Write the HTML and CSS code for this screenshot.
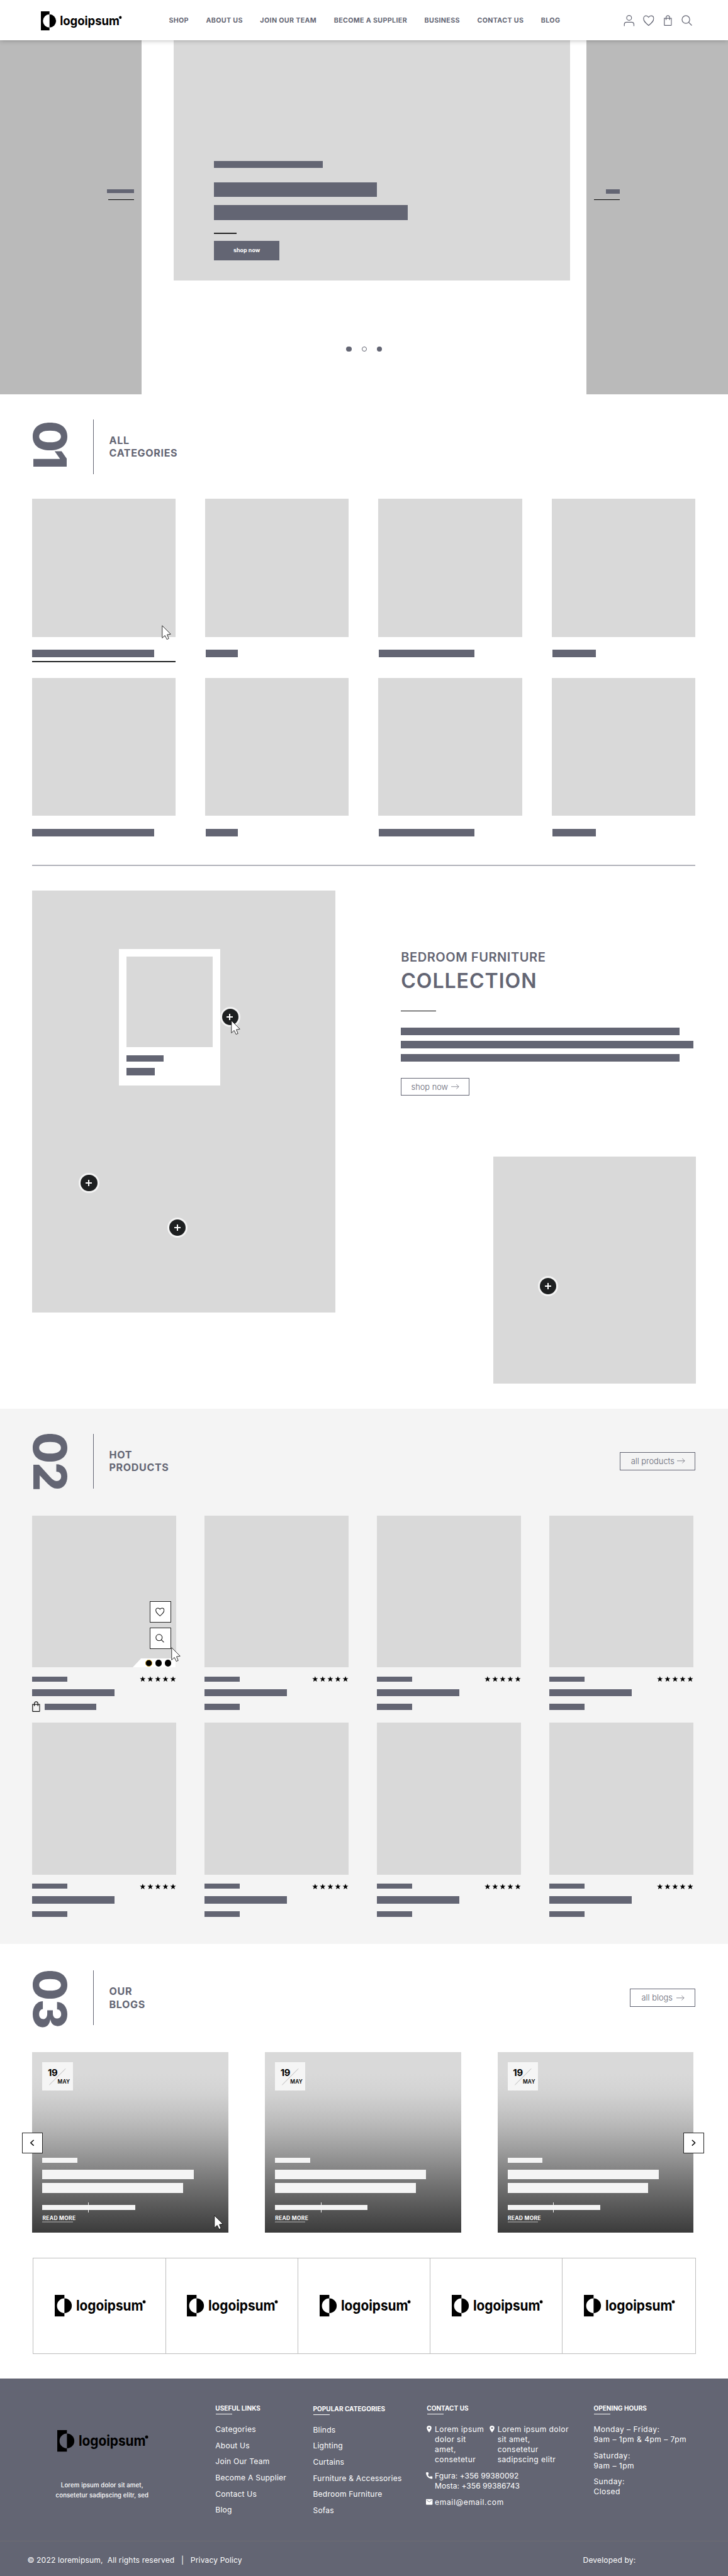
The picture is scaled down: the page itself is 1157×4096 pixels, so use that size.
FILE: index.html
```html
<!DOCTYPE html>
<html lang="en">
<head>
<meta charset="utf-8">
<title>logoipsum</title>
<link rel="stylesheet" href="styles.css">
</head>
<body>
<svg width="0" height="0" class="defs">
  <symbol id="mark" viewBox="0 0 160 38">
    <path d="M0 0H17V6A13 13 0 0 0 17 32V38H0Z"/>
    <path d="M17 6A13 13 0 0 1 17 32Z"/>
    <circle cx="157.2" cy="12" r="2.8"/>
  </symbol>
  <symbol id="heart" viewBox="0 0 22 22"><path d="M11 20.5C5 15.5 1 12 1 6.8C1 3.500 3.300 1.500 6 1.500C8.300 1.500 10 2.700 11 4.300C12 2.700 13.700 1.500 16 1.500C18.700 1.500 21 3.500 21 6.800C21 12 17 15.500 11 20.500Z"/></symbol>
  <symbol id="search" viewBox="0 0 22 22"><circle cx="8.800" cy="8.800" r="7.600"/><path d="M14.200 14.200L20.500 20.500"/></symbol>
  <symbol id="bag" viewBox="0 0 16 22"><path d="M1 6.500H15V19.500Q15 20.500 14 20.500H2Q1 20.500 1 19.500ZM4.500 9.500V4.800A3.500 3.800 0 0 1 11.500 4.800V9.500"/></symbol>
  <symbol id="arrow" viewBox="0 0 17 12"><path d="M0 6H16M11 1L16 6L11 11"/></symbol>
  <symbol id="cursor" viewBox="0 0 19 30"><path d="M1 1V25.500L6.400 20.500L10.300 28.200L14 26.500L10.600 18.900L17.700 17.800Z"/></symbol>
  <symbol id="star" viewBox="0 0 12 12"><path d="M6 .3L7.500 4.300H11.700L8.400 6.900L9.600 11.300L6 8.700L2.400 11.300L3.600 6.900L.3 4.300H4.500Z"/></symbol>
  <symbol id="stars" viewBox="0 0 72 12">
    <use href="#star" x="0" width="12" height="12"/><use href="#star" x="15" width="12" height="12"/><use href="#star" x="30" width="12" height="12"/><use href="#star" x="45" width="12" height="12"/><use href="#star" x="60" width="12" height="12"/>
  </symbol>
  <symbol id="pin" viewBox="0 0 10 14"><path fill-rule="evenodd" d="M5 0A4.700 4.700 0 0 1 9.700 4.700C9.700 8 5 13.500 5 13.500S.3 8 .3 4.700A4.700 4.700 0 0 1 5 0ZM5 3A1.700 1.700 0 1 0 5 6.400A1.700 1.700 0 1 0 5 3Z"/></symbol>
</svg>
<div class="page">
  <header class="topbar">
    <svg class="logo" viewBox="0 0 160 38"><use href="#mark" width="160" height="38"/><text x="37.500" y="27.500" textLength="118" lengthAdjust="spacingAndGlyphs" class="logo-word">logoipsum</text></svg>
    <nav class="nav">
      <a>SHOP</a><a>ABOUT US</a><a>JOIN OUR TEAM</a><a>BECOME A SUPPLIER</a><a>BUSINESS</a><a>CONTACT US</a><a>BLOG</a>
    </nav>
    <div class="tools">
      <svg class="i-user" viewBox="0 0 22 24"><circle cx="11" cy="6.800" r="4.800"/><path d="M1.500 23V20Q1.500 15.500 6 15.500H16Q20.500 15.500 20.500 20V23"/></svg>
      <svg class="i-heart"><use href="#heart"/></svg>
      <svg class="i-bag"><use href="#bag"/></svg>
      <svg class="i-search"><use href="#search"/></svg>
    </div>
  </header>

  <section class="hero">
    <div class="side side-left"><i class="bar"></i><i class="rule"></i></div>
    <div class="slide-col">
      <div class="slide">
        <i class="bar eyebrow"></i><i class="bar line-a"></i><i class="bar line-b"></i><i class="dash"></i>
        <a class="solid-btn">shop now</a>
      </div>
      <div class="dots"><i></i><i class="open"></i><i></i></div>
    </div>
    <div class="side side-right"><i class="bar"></i><i class="rule"></i></div>
  </section>

  <section class="categories">
    <div class="head head-1"><b class="num">01</b><h2>ALL<br>CATEGORIES</h2></div>
    <div class="cat-grid">
      <div class="cat active"><div class="pic"><svg class="cursor"><use href="#cursor"/></svg></div><i class="bar b1"></i></div>
      <div class="cat"><div class="pic"></div><i class="bar b2"></i></div>
      <div class="cat"><div class="pic"></div><i class="bar b3"></i></div>
      <div class="cat"><div class="pic"></div><i class="bar b4"></i></div>
      <div class="cat"><div class="pic"></div><i class="bar b1"></i></div>
      <div class="cat"><div class="pic"></div><i class="bar b2"></i></div>
      <div class="cat"><div class="pic"></div><i class="bar b3"></i></div>
      <div class="cat"><div class="pic"></div><i class="bar b4"></i></div>
    </div>
  </section>

  <section class="collection">
    <div class="room">
      <div class="popup"><div class="popup-pic"></div><i class="bar p1"></i><i class="bar p2"></i></div>
      <span class="spot s1"></span><span class="spot s2"></span><span class="spot s3"></span>
      <svg class="cursor"><use href="#cursor"/></svg>
    </div>
    <div class="copy">
      <h3>BEDROOM FURNITURE</h3>
      <h2>COLLECTION</h2>
      <i class="thin"></i>
      <div class="lines"><i class="bar"></i><i class="bar long"></i><i class="bar"></i></div>
      <a class="line-btn shop">shop now<svg><use href="#arrow"/></svg></a>
      <div class="room-small"><span class="spot s4"></span></div>
    </div>
  </section>

  <section class="products">
    <div class="head"><b class="num">02</b><h2>HOT<br>PRODUCTS</h2><a class="line-btn all-p">all products<svg><use href="#arrow"/></svg></a></div>
    <div class="prod-grid">
      <div class="prod">
        <div class="pic">
          <span class="act a1"><svg><use href="#heart"/></svg></span>
          <span class="act a2"><svg><use href="#search"/></svg></span>
          <span class="swatches"><i class="on"></i><i></i><i></i></span>
          <svg class="cursor"><use href="#cursor"/></svg>
        </div>
        <div class="meta"><i class="bar"></i><svg><use href="#stars"/></svg></div><i class="bar name"></i>
        <div class="buy"><svg><use href="#bag"/></svg><i class="bar"></i></div>
      </div>
      <div class="prod"><div class="pic"></div><div class="meta"><i class="bar"></i><svg><use href="#stars"/></svg></div><i class="bar name"></i><i class="bar price"></i></div>
      <div class="prod"><div class="pic"></div><div class="meta"><i class="bar"></i><svg><use href="#stars"/></svg></div><i class="bar name"></i><i class="bar price"></i></div>
      <div class="prod"><div class="pic"></div><div class="meta"><i class="bar"></i><svg><use href="#stars"/></svg></div><i class="bar name"></i><i class="bar price"></i></div>
      <div class="prod"><div class="pic"></div><div class="meta"><i class="bar"></i><svg><use href="#stars"/></svg></div><i class="bar name"></i><i class="bar price"></i></div>
      <div class="prod"><div class="pic"></div><div class="meta"><i class="bar"></i><svg><use href="#stars"/></svg></div><i class="bar name"></i><i class="bar price"></i></div>
      <div class="prod"><div class="pic"></div><div class="meta"><i class="bar"></i><svg><use href="#stars"/></svg></div><i class="bar name"></i><i class="bar price"></i></div>
      <div class="prod"><div class="pic"></div><div class="meta"><i class="bar"></i><svg><use href="#stars"/></svg></div><i class="bar name"></i><i class="bar price"></i></div>
    </div>
  </section>

  <section class="blogs">
    <div class="head"><b class="num">03</b><h2>OUR<br>BLOGS</h2><a class="line-btn all-b">all blogs<svg><use href="#arrow"/></svg></a></div>
    <div class="blog-row">
      <article class="post">
        <div class="date"><b>19</b><svg viewBox="0 0 34 34"><path d="M.5 33.500L33.500 .5"/></svg><span>MAY</span></div>
        <i class="t0"></i><i class="t1"></i><i class="t2"></i><i class="t3"></i><a>READ MORE</a>
        <svg class="cursor"><use href="#cursor"/></svg>
      </article>
      <article class="post">
        <div class="date"><b>19</b><svg viewBox="0 0 34 34"><path d="M.5 33.500L33.500 .5"/></svg><span>MAY</span></div>
        <i class="t0"></i><i class="t1"></i><i class="t2"></i><i class="t3"></i><a>READ MORE</a>
      </article>
      <article class="post">
        <div class="date"><b>19</b><svg viewBox="0 0 34 34"><path d="M.5 33.500L33.500 .5"/></svg><span>MAY</span></div>
        <i class="t0"></i><i class="t1"></i><i class="t2"></i><i class="t3"></i><a>READ MORE</a>
      </article>
      <span class="step prev"><svg viewBox="0 0 8 13"><path d="M7 1L1 6.500L7 12"/></svg></span>
      <span class="step next"><svg viewBox="0 0 8 13"><path d="M1 1L7 6.500L1 12"/></svg></span>
    </div>
    <div class="brands">
      <div><svg viewBox="0 0 160 38"><use href="#mark" width="160" height="38"/><text x="37.500" y="27.500" textLength="118" lengthAdjust="spacingAndGlyphs" class="logo-word">logoipsum</text></svg></div>
      <div><svg viewBox="0 0 160 38"><use href="#mark" width="160" height="38"/><text x="37.500" y="27.500" textLength="118" lengthAdjust="spacingAndGlyphs" class="logo-word">logoipsum</text></svg></div>
      <div><svg viewBox="0 0 160 38"><use href="#mark" width="160" height="38"/><text x="37.500" y="27.500" textLength="118" lengthAdjust="spacingAndGlyphs" class="logo-word">logoipsum</text></svg></div>
      <div><svg viewBox="0 0 160 38"><use href="#mark" width="160" height="38"/><text x="37.500" y="27.500" textLength="118" lengthAdjust="spacingAndGlyphs" class="logo-word">logoipsum</text></svg></div>
      <div><svg viewBox="0 0 160 38"><use href="#mark" width="160" height="38"/><text x="37.500" y="27.500" textLength="118" lengthAdjust="spacingAndGlyphs" class="logo-word">logoipsum</text></svg></div>
    </div>
  </section>

  <footer>
    <div class="foot-cols">
      <div class="foot-brand"><svg viewBox="0 0 160 38"><use href="#mark" width="160" height="38"/><text x="37.500" y="27.500" textLength="118" lengthAdjust="spacingAndGlyphs" class="logo-word">logoipsum</text></svg><p>Lorem ipsum dolor sit amet,<br>consetetur sadipscing elitr, sed</p></div>
      <div class="col useful"><h4>USEFUL LINKS</h4><a>Categories</a><a>About Us</a><a>Join Our Team</a><a>Become A Supplier</a><a>Contact Us</a><a>Blog</a></div>
      <div class="col popular"><h4>POPULAR CATEGORIES</h4><a>Blinds</a><a>Lighting</a><a>Curtains</a><a>Furniture &amp; Accessories</a><a>Bedroom Furniture</a><a>Sofas</a></div>
      <div class="col contact"><h4>CONTACT US</h4>
        <div class="addresses">
          <div class="entry"><svg class="pin"><use href="#pin"/></svg><p>Lorem ipsum<br>dolor sit<br>amet,<br>consetetur</p></div>
          <div class="entry"><svg class="pin"><use href="#pin"/></svg><p>Lorem ipsum dolor<br>sit amet,<br>consetetur<br>sadipscing elitr</p></div>
        </div>
        <div class="entry nums"><svg class="ico" viewBox="0 0 13 13"><path d="M2.600 0L4.600 .2L5.300 3.600L3.700 5.200A9 9 0 0 0 7.800 9.300L9.400 7.700L12.800 8.400V12.200Q12.800 13 12 13C5 12.800 .2 8 0 1Q0 .2 .8 .2Z"/></svg><p>Fgura: +356 99380092<br>Mosta: +356 99386743</p></div>
        <div class="entry mail"><svg class="ico" viewBox="0 0 13 13"><rect y="1" width="13" height="11" rx="1"/><path class="flap" d="M1.500 3L6.500 6.500L11.500 3"/></svg><p>email@email.com</p></div>
      </div>
      <div class="col hours"><h4>OPENING HOURS</h4><p>Monday – Friday:<br>9am – 1pm &amp; 4pm – 7pm</p><p>Saturday:<br>9am – 1pm</p><p>Sunday:<br>Closed</p></div>
    </div>
    <div class="legal"><span class="copyright">© 2022 loremipsum,&nbsp; All rights reserved &nbsp;&nbsp;|&nbsp;&nbsp; Privacy Policy</span><span class="dev">Developed by:</span></div>
  </footer>
</div>
</body>
</html>
```
FILE: styles.css
```css
* { box-sizing: border-box; margin: 0; padding: 0; }
html { background: #636573; }
body { overflow: hidden; }
/* Designed on a 1440px canvas, scaled to the 1157px window. */
.page {
  width: 1440px;
  zoom: 0.8036;
  background: #fff;
  color: #636573;
  font-family: Inter, "Noto Sans", sans-serif;
}
.defs { position: absolute; }
i { display: block; }
svg { display: block; flex: none; overflow: visible; }
.bar { background: #636573; }
.logo-word { font-weight: 700; font-size: 25px; }
.cursor { position: absolute; width: 19px; height: 30px; fill: #fff; stroke: #000; z-index: 3; }

/* Top bar */
.topbar {
  position: relative; z-index: 2;
  display: flex; align-items: center;
  height: 80px; padding: 2px 70px 0 81px;
  background: #fff; box-shadow: 0 1px 10px rgba(0,0,0,.3);
}
.logo { width: 160px; height: 38px; }
.nav { display: flex; gap: 34.300px; margin-left: 93px; }
.nav a { font-size: 13.300px; font-weight: 700; line-height: 20px; letter-spacing: .440px; white-space: nowrap; }
.tools { display: flex; align-items: center; margin-left: auto; fill: none; stroke: #636573; stroke-width: 1.500; }
.i-user { width: 22px; height: 24px; }
.i-heart { width: 22px; height: 22px; margin-left: 17px; }
.i-bag { width: 16px; height: 22px; margin-left: 19px; }
.i-search { width: 22px; height: 22px; margin-left: 19px; }

/* Hero */
.hero { display: grid; grid-template-columns: 280px 1fr 280px; height: 700px; }
.side { display: flex; flex-direction: column; align-items: flex-end; background: #bababa; }
.side .rule { height: 1.250px; background: #000; }
.side-left { padding: 294px 15px 0 0; gap: 12px; }
.side-left .bar { width: 54px; height: 8px; }
.side-left .rule { width: 51px; }
.side-right { padding: 295px 214px 0 0; gap: 11px; }
.side-right .bar { width: 28px; height: 8px; }
.side-right .rule { width: 51px; }
.slide { width: 785px; height: 475px; margin-left: 63px; padding: 239px 0 0 80px; background: #d9d9d9; }
.eyebrow { width: 215px; height: 13px; }
.line-a { width: 322px; height: 29px; margin-top: 29px; }
.line-b { width: 383px; height: 29px; margin-top: 16px; }
.dash { width: 45px; height: 3px; margin-top: 25.500px; background: #222; }
.solid-btn { display: block; width: 130px; height: 38px; margin-top: 13.500px; background: #636573; color: #fff; font-size: 11px; font-weight: 700; line-height: 38px; text-align: center; letter-spacing: .1px; }
.dots { display: flex; justify-content: center; gap: 20px; margin-top: 131px; }
.dots i { width: 10px; height: 10px; border-radius: 50%; background: #636573; }
.dots .open { background: #fff; border: 1px solid #636573; }

/* Numbered section headings */
.head { display: flex; align-items: center; height: 108px; margin-left: 64px; margin-right: 64.500px; }
.num { width: 122px; height: 108px; border-right: 1.250px solid #636573; padding-right: 50px; writing-mode: vertical-rl; font-size: 90px; line-height: 72px; font-weight: 800; letter-spacing: -2.500px; text-indent: -3px; white-space: nowrap; }
.head-1 .num { letter-spacing: -6px; text-indent: 3px; }
.head h2 { margin-left: 30px; font-size: 20px; line-height: 25px; font-weight: 700; letter-spacing: .8px; }
.line-btn { display: flex; align-items: center; justify-content: space-between; height: 36px; border: 1.250px solid #636573; color: #636573; font-size: 16px; font-weight: 300; white-space: nowrap; }
.line-btn svg { width: 16px; height: 12px; fill: none; stroke: #636573; }

/* Categories */
.categories { width: 1312px; margin: 0 0 0 63px; padding-top: 50px; height: 934px; border-bottom: 2.500px solid #b1b2ba; }
.categories .head { margin-left: 1px; }
.cat-grid { display: grid; grid-template-columns: repeat(4, 284px); justify-content: space-between; grid-template-rows: 354px 354px; margin-top: 49px; }
.pic { position: relative; background: #d9d9d9; }
.cat .pic { height: 273px; }
.cat .bar { height: 15px; margin: 26px 0 0 1px; }
.active::after { content: ""; display: block; height: 2.500px; margin-top: 7px; background: #1e2021; }
.b1 { width: 241px; } .b2 { width: 64px; } .b3 { width: 189px; } .b4 { width: 86px; }
.cat .cursor { left: 257px; top: 250px; }

/* Collection */
.collection { display: flex; height: 1073px; padding: 48.500px 64px 0 63px; }
.room { position: relative; width: 600px; height: 834.500px; background: #d9d9d9; }
.popup { position: absolute; left: 172px; top: 115px; width: 200px; height: 270px; padding: 15px; background: #fff; }
.popup-pic { height: 180px; background: #d9d9d9; }
.p1 { width: 73px; height: 12px; margin-top: 15.500px; }
.p2 { width: 56px; height: 15px; margin-top: 13px; }
.spot { position: absolute; width: 40px; height: 40px; border: 4.500px solid #f4f4f4; border-radius: 50%; background: linear-gradient(#fff,#fff) center/13px 3px no-repeat, linear-gradient(#fff,#fff) center/3px 13px no-repeat, #1e2021; }
.s1 { left: 372px; top: 230px; } .s2 { left: 93px; top: 558px; } .s3 { left: 268px; top: 647px; } .s4 { left: 88px; top: 237px; }
.room .cursor { left: 394px; top: 256px; }
.copy { display: flex; flex-direction: column; align-items: flex-start; width: 583px; margin-left: 130px; padding-top: 117px; }
.copy h3 { font-size: 25px; line-height: 30px; font-weight: 600; letter-spacing: .650px; white-space: nowrap; }
.copy h2 { margin-top: 7.500px; font-size: 40px; line-height: 50px; font-weight: 600; letter-spacing: 1.150px; white-space: nowrap; }
.thin { width: 70px; height: 1.500px; margin-top: 33px; background: #000; }
.lines { display: grid; gap: 11px; margin-top: 32px; }
.lines .bar { width: 551px; height: 15px; }
.lines .long { width: 578px; }
.shop { width: 135px; margin-top: 32px; padding: 0 18px 0 19px; }
.room-small { position: relative; align-self: flex-end; width: 400px; height: 450px; margin-top: 119.500px; background: #d9d9d9; }

/* Products */
.products { height: 1059.500px; padding-top: 50px; background: #f4f4f4; }
.all-p { width: 150px; margin-left: auto; padding: 0 19px 0 21px; }
.all-b { width: 130px; margin-left: auto; padding: 0 20px 0 22px; }
.prod-grid { display: grid; grid-template-columns: repeat(4, 284px); column-gap: 57px; grid-auto-rows: 410px; margin: 54px 0 0 64px; }
.prod .pic { height: 300.500px; }
.meta { display: flex; justify-content: space-between; margin-top: 18px; height: 10px; }
.meta .bar { width: 69px; }
.meta svg { width: 72px; height: 12px; margin-top: -1px; fill: #000; }
.name { width: 162px; height: 14px; margin-top: 15px; }
.price { width: 69px; height: 12px; margin-top: 15px; }
.buy { display: flex; align-items: center; gap: 9px; height: 22px; margin-top: 10px; }
.buy svg { width: 16px; height: 22px; fill: none; stroke: #111; stroke-width: 1.500; }
.buy .bar { width: 102px; height: 12px; }
.act { position: absolute; left: 232px; display: flex; align-items: center; justify-content: center; width: 42px; height: 43px; border: 1.250px solid #222; background: #fff; }
.act svg { width: 18px; height: 18px; fill: none; stroke: #111; stroke-width: 1.600; }
.a1 { top: 169px; } .a2 { top: 221px; }
.swatches { position: absolute; right: 0; bottom: 0; display: flex; gap: 6px; width: 86px; height: 18px; padding: 3px 0 0 26px; background: #fff; clip-path: polygon(17px 0, 100% 0, 100% 100%, 0 100%); }
.swatches i { width: 13px; height: 13px; border-radius: 50%; background: #000; }
.swatches .on { border: 1px solid #c89b1e; }
.prod .cursor { left: 274px; top: 260px; }

/* Blogs */
.blogs { height: 860.500px; padding-top: 52.500px; }
.blog-row { position: relative; display: flex; gap: 72.300px; margin: 54px 0 0 64px; width: 1308px; }
.post { position: relative; width: 387.800px; height: 356.500px; padding: 20px; background: linear-gradient(#d9d9d9, #d9d9d9 12%, #d3d3d3 22%, #c6c6c6 32%, #b9b9b9 40%, #aeaeae 46%, #999 56%, #808080 67%, #626262 81%, #3b3b3b); }
.post > i { background: #f5f5f5; }
.date { position: relative; width: 60px; height: 56px; background: #f5f5f5; color: #000; }
.date b { position: absolute; left: 10.500px; top: 11px; font-size: 18.500px; line-height: 20px; letter-spacing: -.4px; }
.date span { position: absolute; left: 30px; top: 33px; font-size: 10.500px; line-height: 10px; font-weight: 600; letter-spacing: .1px; }
.date svg { position: absolute; left: 13.500px; top: 11.500px; width: 33px; height: 33px; stroke: #a5a5a5; fill: none; }
.t0 { width: 69px; height: 10px; margin-top: 133px; }
.t1 { width: 299px; height: 19px; margin-top: 13px; }
.t2 { width: 278px; height: 19px; margin-top: 8px; }
.t3 { position: relative; width: 183px; height: 10px; margin-top: 24px; }
.t3::after { content: ""; position: absolute; left: 90px; top: -4.500px; width: 1.250px; height: 19px; background: #f5f5f5; }
.post a { position: relative; display: block; margin-top: 9.500px; color: #fff; font-size: 10.500px; line-height: 14px; font-weight: 700; letter-spacing: .4px; white-space: nowrap; }
.post a::after { content: ""; position: absolute; left: 0; top: 13px; width: 60px; height: 2px; background: #808080; }
.post .cursor { left: 359px; top: 322px; }
.step { position: absolute; top: 158.500px; display: flex; align-items: center; justify-content: center; width: 40px; height: 41px; border: 1.250px solid #222; background: #fff; z-index: 2; }
.prev { left: -20px; } .next { right: -20px; }
.step svg { width: 8px; height: 13px; fill: none; stroke: #000; stroke-width: 1.800; }
.brands { display: grid; grid-template-columns: repeat(5, 1fr); width: 1311px; height: 191px; margin: 49.500px 0 0 65px; border: 1.250px solid #bdbdbd; }
.brands div { display: flex; align-items: center; padding-left: 42px; border-right: 1.250px solid #bdbdbd; }
.brands div:last-child { border-right: 0; }
.brands svg { width: 180px; height: 43px; }

/* Footer */
footer { height: 391px; background: #636573; color: #fff; }
.foot-cols { display: flex; height: 322px; padding-top: 48px; border-bottom: 1.250px solid #6e6d72; }
.foot-brand { width: 178px; margin-left: 113px; }
.foot-brand svg { width: 180px; height: 43px; margin-top: 53.500px; fill: #000; }
.foot-brand p { margin: 57px -20px 0; font-size: 12px; line-height: 20px; font-weight: 500; text-align: center; letter-spacing: .15px; }
.col { font-size: 15px; line-height: 20px; letter-spacing: .3px; white-space: nowrap; }
.col h4 { position: relative; height: 42px; font-size: 12.500px; line-height: 21px; font-weight: 700; letter-spacing: .05px; }
.col h4::after { content: ""; position: absolute; left: 1px; top: 21px; width: 32px; height: 1.250px; background: #fff; }
.col > a { display: block; height: 32px; line-height: 21px; }
.useful { width: 193px; margin-left: 135px; }
.popular { width: 225px; padding-top: 1px; }
.contact { width: 330px; }
.addresses { display: flex; gap: 7px; letter-spacing: .5px; }
.entry { display: flex; gap: 6px; }
.addresses .entry:first-child { width: 117px; }
.pin { width: 10px; height: 14px; fill: #fff; margin-top: 3px; }
.nums, .mail { margin: 12px 0 0 -2px; gap: 5px; }
.nums { letter-spacing: .05px; }
.mail { letter-spacing: .8px; }
.ico { width: 13px; height: 13px; fill: #fff; margin-top: 3px; }
.flap { fill: none; stroke: #636573; }
.hours { letter-spacing: .6px; }
.hours p { margin-bottom: 12px; }
.legal { display: flex; padding: 24px 0 0 54px; font-size: 15px; line-height: 24px; letter-spacing: .2px; }
.dev { margin-left: auto; width: 287px; }
```
